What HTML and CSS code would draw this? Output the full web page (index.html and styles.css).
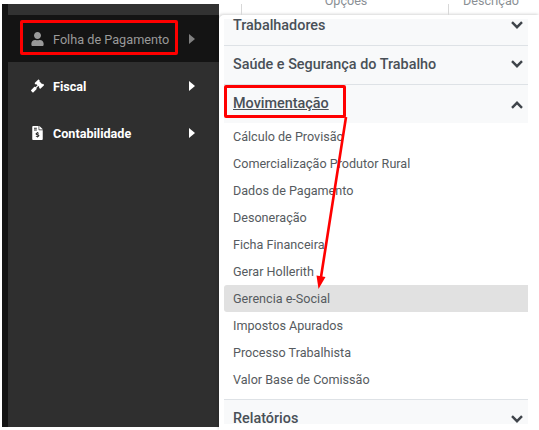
FILE: index.html
```html
<!DOCTYPE html>
<html lang="pt-BR">
<head>
<meta charset="utf-8">
<title>Folha de Pagamento</title>
<link rel="stylesheet" href="styles.css">
</head>
<body>
<div class="app">
  <aside class="sidebar">
    <div class="rail"></div>
    <nav class="nav">
      <div class="nav-top"></div>
      <a class="nav-row is-active">
        <svg class="nav-icon" viewBox="0 0 448 512"><path d="M224 256c70.7 0 128-57.3 128-128S294.7 0 224 0 96 57.3 96 128s57.3 128 128 128zm89.6 32h-16.7c-22.2 10.2-46.9 16-72.9 16s-50.6-5.8-72.9-16h-16.7C60.2 288 0 348.2 0 422.4V464c0 26.5 21.5 48 48 48h352c26.5 0 48-21.5 48-48v-41.6c0-74.2-60.2-134.4-134.4-134.4z"/></svg>
        <span class="nav-label">Folha de Pagamento</span>
        <span class="caret"></span>
      </a>
      <a class="nav-row">
        <svg class="nav-icon" viewBox="0 0 512 512"><path d="M504.971 199.362l-22.627-22.627c-9.373-9.373-24.569-9.373-33.941 0l-5.657 5.657L329.608 69.255l5.657-5.657c9.373-9.373 9.373-24.569 0-33.941L312.638 7.029c-9.373-9.373-24.569-9.373-33.941 0L154.246 131.48c-9.373 9.373-9.373 24.569 0 33.941l22.627 22.627c9.373 9.373 24.569 9.373 33.941 0l5.657-5.657 39.598 39.598-81.04 81.04-5.657-5.657c-12.497-12.497-32.758-12.497-45.255 0L9.373 412.118c-12.497 12.497-12.497 32.758 0 45.255l45.255 45.255c12.497 12.497 32.758 12.497 45.255 0l114.745-114.745c12.497-12.497 12.497-32.758 0-45.255l-5.657-5.657 81.04-81.04 39.598 39.598-5.657 5.657c-9.373 9.373-9.373 24.569 0 33.941l22.627 22.627c9.373 9.373 24.569 9.373 33.941 0l124.451-124.451c9.372-9.372 9.372-24.568 0-33.941z"/></svg>
        <span class="nav-label">Fiscal</span>
        <span class="caret"></span>
      </a>
      <a class="nav-row">
        <svg class="nav-icon" viewBox="0 0 384 512"><path fill-rule="evenodd" d="M40 0H232V128c0 13 11 24 24 24H384V472c0 22-18 40-40 40H40c-22 0-40-18-40-40V40C0 18 18 0 40 0zM256 0c6 0 12 3 17 7L377 111c4 5 7 11 7 17H256V0zM64 64V96H168V64H64zM64 128V160H168V128H64zM176 216V240c-32 4-52 24-52 50 0 28 20 40 50 48 20 5 26 9 26 16 0 8-10 12-22 12-12 0-24-4-34-10l-18 30c12 8 28 14 50 16v22h32v-24c32-4 52-24 52-50 0-30-22-42-50-50-20-6-26-8-26-14 0-6 8-10 20-10 10 0 20 3 28 8l18-30c-12-7-26-12-42-14V216H176z"/></svg>
        <span class="nav-label">Contabilidade</span>
        <span class="caret"></span>
      </a>
    </nav>
  </aside>

  <main class="content">
    <div class="table-head">
      <div class="th th-options"><span class="th-text">Opções</span></div>
      <div class="th th-desc"><span class="th-text">Descrição</span></div>
    </div>
    <section class="panel">
      <div class="accordion">
        <div class="acc-head acc-first">
          <span>Trabalhadores</span>
          <svg class="chev" viewBox="0 0 12 8"><path d="M1 1.2 6 6.2 11 1.2"/></svg>
        </div>
        <div class="acc-head acc-mid">
          <span>Saúde e Segurança do Trabalho</span>
          <svg class="chev" viewBox="0 0 12 8"><path d="M1 1.2 6 6.2 11 1.2"/></svg>
        </div>
        <div class="acc-head acc-open">
          <span class="acc-current">Movimentação</span>
          <svg class="chev chev-up" viewBox="0 0 12 8"><path d="M1 6.8 6 1.8 11 6.8"/></svg>
        </div>
        <ul class="acc-list">
          <li>Cálculo de Provisão</li>
          <li>Comercialização Produtor Rural</li>
          <li>Dados de Pagamento</li>
          <li>Desoneração</li>
          <li>Ficha Financeira</li>
          <li>Gerar Hollerith</li>
          <li class="is-hover">Gerencia e-Social</li>
          <li>Impostos Apurados</li>
          <li>Processo Trabalhista</li>
          <li>Valor Base de Comissão</li>
        </ul>
        <div class="acc-head acc-last">
          <span>Relatórios</span>
          <svg class="chev" viewBox="0 0 12 8"><path d="M1 1.2 6 6.2 11 1.2"/></svg>
        </div>
      </div>
    </section>
  </main>
</div>

<div class="mark mark-folha"></div>
<div class="mark mark-mov"></div>
<svg class="arrow" viewBox="0 0 539 430"><path class="arrow-line" d="M346 117 321 277"/><path class="arrow-head" d="M316.500 275.500 325.500 277 318.500 289Z"/></svg>
</body>
</html>
```

FILE: styles.css
```css
* {
  box-sizing: border-box;
}

html,
body {
  margin: 0;
  height: 430px;
  overflow: hidden;
  background: #fff;
}

body {
  position: relative;
  font-family: Roboto, "Liberation Sans", sans-serif;
}

.app {
  display: flex;
  height: 430px;
  padding-left: 2px;
}

.sidebar {
  display: flex;
  flex: 0 0 217px;
  height: 423px;
  margin-top: 4px;
  background: #2f2f2f;
}

.rail {
  flex: 0 0 6px;
  background: #141414;
}

.nav {
  flex: 1;
}

.nav-top {
  height: 11px;
  background: #323232;
}

.nav-row {
  display: flex;
  align-items: center;
  height: 47px;
  padding-left: 23px;
  color: #fff;
  fill: #fff;
  font-size: 12.6px;
  font-weight: 700;
}

.nav-row.is-active {
  background: #141414;
  color: #9a9a9a;
  fill: #9a9a9a;
  font-size: 12.7px;
  font-weight: 400;
}

.nav-icon {
  flex: 0 0 13px;
  width: 13px;
  height: 14px;
}

.nav-label {
  flex: 0 0 136px;
  margin-left: 9px;
  padding-top: 1px;
  white-space: nowrap;
}

.caret {
  width: 0;
  height: 0;
  border-top: 5px solid transparent;
  border-bottom: 5px solid transparent;
  border-left: 6px solid currentColor;
}

.is-active .caret {
  color: #808080;
}

.content {
  flex: 1;
  min-width: 0;
}

.table-head {
  display: flex;
  height: 15px;
  margin-left: 22px;
  margin-right: 20px;
  padding-top: 4px;
  overflow: visible;
}

.th {
  height: 11px;
  border-left: 1px solid #d8d8d8;
  color: #8a8f94;
  font-size: 12.6px;
  line-height: 0;
  text-align: center;
  white-space: nowrap;
}

.th-text {
  display: block;
  margin-top: -3px;
}

.th-options {
  flex: 0 0 207px;
  padding-left: 2px;
}

.th-desc {
  flex: 1;
  padding-left: 14px;
  text-align: left;
}

.panel {
  height: 415px;
  padding: 4px 11px 0 5px;
  overflow: hidden;
  border-radius: 5px 0 0 0;
  background: #fff;
  box-shadow: -1px -1px 3px rgba(0, 0, 0, 0.16);
}

.accordion {
  height: 405px;
  overflow: hidden;
}

.acc-head {
  display: flex;
  align-items: center;
  justify-content: space-between;
  height: 39px;
  padding: 0 5px 0 9px;
  border-bottom: 1px solid #dee2e6;
  background: #f8f9fa;
  color: #495057;
  font-size: 14.4px;
  font-weight: 500;
}

.acc-first {
  height: 27px;
  padding-bottom: 14px;
}

.acc-mid {
  padding-bottom: 2px;
}

.acc-open {
  height: 38px;
  padding-bottom: 2px;
  border-bottom: 0;
}

.acc-last {
  height: 25px;
  padding-top: 12px;
  border-bottom: 0;
}

.acc-current {
  text-decoration: underline;
}

.chev {
  flex: 0 0 12px;
  width: 12px;
  height: 8px;
  fill: none;
  stroke: #3f444a;
  stroke-width: 2.4;
}

.chev-up {
  margin-top: 4px;
}

.acc-list {
  margin: 0;
  padding: 0 0 6px;
  border-bottom: 1px solid #dee2e6;
  list-style: none;
}

.acc-list li {
  height: 27px;
  padding-left: 9px;
  color: #565b60;
  font-size: 12.6px;
  line-height: 27px;
}

.acc-list .is-hover {
  border-radius: 3px 0 0 3px;
  background: #e1e1e1;
}

.mark {
  position: absolute;
  border: 3px solid #f00;
  border-radius: 2px;
}

.mark-folha {
  left: 20px;
  top: 20px;
  width: 158px;
  height: 35px;
}

.mark-mov {
  left: 224px;
  top: 85px;
  width: 122px;
  height: 33px;
}

.arrow {
  position: absolute;
  left: 0;
  top: 0;
  width: 539px;
  height: 430px;
  pointer-events: none;
}

.arrow-line {
  fill: none;
  stroke: #f00;
  stroke-width: 2.6;
}

.arrow-head {
  fill: #f00;
}
```
